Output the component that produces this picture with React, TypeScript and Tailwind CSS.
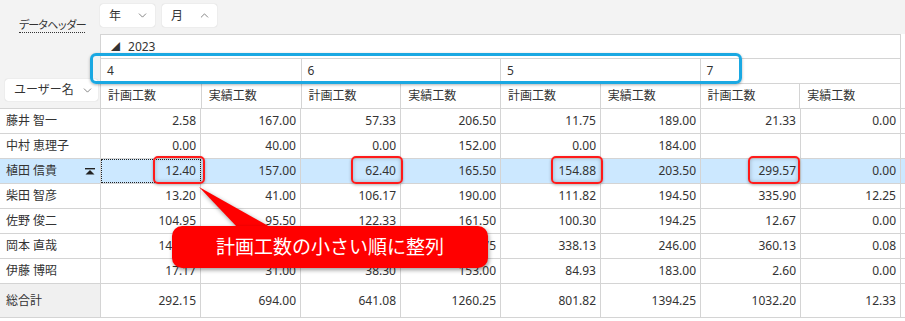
import * as React from "react";
import {ChevronDown, ChevronUp} from "lucide-react";

type Row = { name: string; values: string[] };

const months = ["4", "6", "5", "7"];

const rows: Row[] = [
    {name: "藤井 智一", values: ["2.58", "167.00", "57.33", "206.50", "11.75", "189.00", "21.33", "0.00"]},
    {name: "中村 恵理子", values: ["0.00", "40.00", "0.00", "152.00", "0.00", "184.00", "", ""]},
    {name: "植田 信貴", values: ["12.40", "157.00", "62.40", "165.50", "154.88", "203.50", "299.57", "0.00"]},
    {name: "柴田 智彦", values: ["13.20", "41.00", "106.17", "190.00", "111.82", "194.50", "335.90", "12.25"]},
    {name: "佐野 俊二", values: ["104.95", "95.50", "122.33", "161.50", "100.30", "194.25", "12.67", "0.00"]},
    {name: "岡本 直哉", values: ["141.85", "162.50", "254.55", "231.75", "338.13", "246.00", "360.13", "0.08"]},
    {name: "伊藤 博昭", values: ["17.17", "31.00", "38.30", "153.00", "84.93", "183.00", "2.60", "0.00"]},
];

const totals = ["292.15", "694.00", "641.08", "1260.25", "801.82", "1394.25", "1032.20", "12.33"];

// row that is sorted / selected in the screenshot
const SELECTED = 2;

function PickerButton({label, up}: { label: string; up?: boolean }) {
    return (
        <div className="flex h-[23px] w-[55px] items-center justify-between rounded-[3px] bg-white pl-[9px] pr-[6px] shadow-[0_0_1px_rgba(0,0,0,0.25)]">
            <span className="text-[12px] text-[#333]">{label}</span>
            {up
                ? <ChevronUp size={13} strokeWidth={1.3} className="text-[#555]"/>
                : <ChevronDown size={13} strokeWidth={1.3} className="text-[#555]"/>}
        </div>
    );
}

function SortIcon() {
    return (
        <svg width="10" height="7" viewBox="0 0 10 7" className="text-[#222]">
            <rect x="0" y="0" width="10" height="1.4" fill="currentColor"/>
            <polygon points="5,2 9.5,6.5 0.5,6.5" fill="currentColor"/>
        </svg>
    );
}

function Highlight({left, width}: { left: number; width: number }) {
    return (
        <div
            className="absolute top-[156px] h-[28px] rounded-[5px] border-2 border-[#ff1a1a] shadow-[inset_0_0_4px_rgba(0,0,0,0.25),0_1px_3px_rgba(0,0,0,0.3)]"
            style={{left, width}}
        />
    );
}

export default function App() {
    return (
        <div
            className="relative h-[321px] w-[905px] overflow-hidden bg-white text-[12px] text-[#333]"
            style={{fontFamily: '"Noto Sans", "Noto Sans CJK JP", sans-serif'}}
        >
            {/* top toolbar */}
            <div className="flex h-[34px] bg-[#f3f3f3]">
                <div className="flex w-[100px] items-end justify-center pb-[1px] pl-[4px]">
                    <span className="border-b border-dotted border-[#333] text-[11px] leading-[14px] tracking-[-1.5px]">データヘッダー</span>
                </div>
                <div className="flex gap-[7px] pt-[4px]">
                    <PickerButton label="年"/>
                    <PickerButton label="月" up/>
                </div>
            </div>

            {/* column headers */}
            <div className="flex">
                <div className="flex h-[74px] w-[100px] flex-col justify-end bg-[#f3f3f3] pb-[7px] pl-[5px]">
                    <div className="flex h-[22px] w-[93px] items-center justify-between rounded-[3px] bg-white pl-[9px] pr-[4px] shadow-[0_0_1px_rgba(0,0,0,0.25)]">
                        <span>ユーザー名</span>
                        <ChevronDown size={13} strokeWidth={1.3} className="text-[#555]"/>
                    </div>
                </div>
                <div className="w-[801px] border-l border-t border-r border-[#d4d4d4]">
                    <div className="flex h-[24px] items-center gap-[8px] border-b border-[#d4d4d4] pl-[10px]">
                        <span className="text-[9px] leading-none">◢</span>
                        <span>2023</span>
                    </div>
                    <div className="flex h-[25px] border-b border-[#d4d4d4]">
                        {months.map((m, i) => (
                            <div key={m}
                                 className={`flex items-center pl-[6px] ${i === 0 ? "w-[201px]" : "w-[200px]"} ${i < 3 ? "border-r border-[#d4d4d4]" : ""}`}>
                                {m}
                            </div>
                        ))}
                    </div>
                    <div className="flex h-[24px]">
                        {months.map((m, i) => (
                            <React.Fragment key={m}>
                                <div className={`flex items-center border-r border-[#d4d4d4] pl-[7px] ${i === 0 ? "w-[101px]" : "w-[100px]"}`}>計画工数</div>
                                <div className={`flex items-center pl-[7px] w-[100px] ${i < 3 ? "border-r border-[#d4d4d4]" : ""}`}>実績工数</div>
                            </React.Fragment>
                        ))}
                    </div>
                </div>
            </div>

            {/* body rows */}
            <div className="border-t border-[#d4d4d4]">
                {rows.map((row, r) => (
                    <div key={row.name}
                         className={`flex h-[25px] border-b border-[#d4d4d4] ${r === SELECTED ? "bg-[#cce8ff]" : ""}`}>
                        <div className="flex w-[101px] items-center justify-between border-r border-[#d4d4d4] pl-[6px] pr-[5px]">
                            <span>{row.name}</span>
                            {r === SELECTED && <SortIcon/>}
                        </div>
                        {row.values.map((v, c) => (
                            <div key={c}
                                 className={`flex w-[100px] items-center justify-end border-r border-[#d4d4d4] pr-[4px] ${r === SELECTED && c === 0 ? "outline-1 outline-dotted outline-[#222] -outline-offset-1" : ""}`}>
                                {v}
                            </div>
                        ))}
                    </div>
                ))}
                <div className="flex h-[34px] border-b border-[#d4d4d4]">
                    <div className="flex w-[101px] items-center border-r border-[#d4d4d4] bg-[#f0f0f0] pl-[6px]">総合計</div>
                    {totals.map((v, c) => (
                        <div key={c} className="flex w-[100px] items-center justify-end border-r border-[#d4d4d4] pr-[4px]">{v}</div>
                    ))}
                </div>
            </div>

            {/* annotations */}
            <div className="absolute left-[90px] top-[53px] h-[31px] w-[652px] rounded-[6px] border-[3px] border-[#1aa8e2] shadow-[0_1px_3px_rgba(0,0,0,0.3)]"/>
            <Highlight left={153} width={52}/>
            <Highlight left={351} width={52}/>
            <Highlight left={551} width={52}/>
            <Highlight left={748} width={52}/>

            <svg className="absolute left-0 top-0" width="905" height="321">
                <polygon points="199,187 238,228 272,228" fill="#ff0000"
                         style={{filter: "drop-shadow(0 1px 2px rgba(0,0,0,0.35))"}}/>
            </svg>
            <div className="absolute left-[172px] top-[226px] flex h-[42px] w-[316px] items-center justify-center rounded-[10px] bg-[#ff0000] text-[19px] text-white shadow-[1px_2px_4px_rgba(0,0,0,0.4)]">
                計画工数の小さい順に整列
            </div>
        </div>
    );
}
